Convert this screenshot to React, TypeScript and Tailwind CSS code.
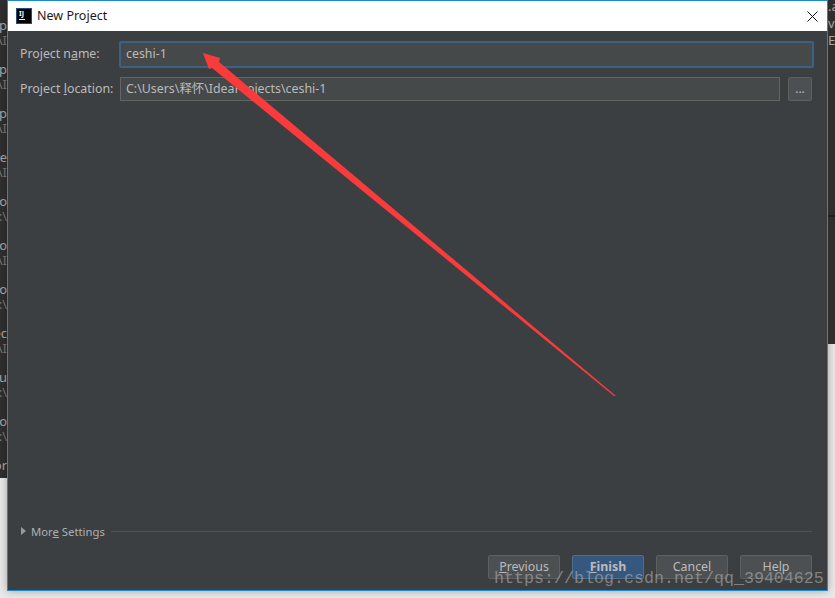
const sans = "font-['Noto_Sans','Open_Sans','Noto_Sans_CJK_SC',sans-serif]";

function SideText({ rows, align }: { rows: { t: string; c: string; h: number }[]; align: string }) {
  return (
    <div className={`flex flex-col overflow-hidden text-[13px] leading-none ${align}`}>
      {rows.map((r, i) => (
        <div key={i} className={`whitespace-nowrap ${r.c}`} style={{ height: r.h }}>
          {r.t}
        </div>
      ))}
    </div>
  );
}

function Btn({ children, primary }: { children: React.ReactNode; primary?: boolean }) {
  return (
    <button
      className={
        primary
          ? "flex h-6 w-[72px] items-center justify-center rounded-[2px] border border-[#4c708c] bg-[#365880] pt-px text-[12.4px] font-bold text-[#bbbbbb]"
          : "flex h-6 w-[72px] items-center justify-center rounded-[2px] border border-[#5e6060] bg-[#4c5052] pt-px text-[12.4px] text-[#bbbbbb]"
      }
    >
      {children}
    </button>
  );
}

const leftRows = [
  { t: "", c: "", h: 19 },
  { t: "p", c: "text-[#a9a9a9]", h: 15 },
  { t: "\\I", c: "text-[#77797a]", h: 29 },
  { t: "p", c: "text-[#a9a9a9]", h: 15 },
  { t: "\\I", c: "text-[#77797a]", h: 29 },
  { t: "p", c: "text-[#a9a9a9]", h: 15 },
  { t: "\\I", c: "text-[#77797a]", h: 29 },
  { t: "le", c: "text-[#a9a9a9]", h: 15 },
  { t: "\\I", c: "text-[#77797a]", h: 29 },
  { t: "o", c: "text-[#a9a9a9]", h: 15 },
  { t: ":\\", c: "text-[#77797a]", h: 29 },
  { t: "o", c: "text-[#a9a9a9]", h: 15 },
  { t: "\\I", c: "text-[#77797a]", h: 29 },
  { t: "o", c: "text-[#a9a9a9]", h: 15 },
  { t: ":\\", c: "text-[#77797a]", h: 29 },
  { t: "ec", c: "text-[#a9a9a9]", h: 15 },
  { t: "\\I", c: "text-[#77797a]", h: 29 },
  { t: "u", c: "text-[#a9a9a9]", h: 15 },
  { t: ":\\", c: "text-[#77797a]", h: 29 },
  { t: "o", c: "text-[#a9a9a9]", h: 15 },
  { t: ":\\", c: "text-[#77797a]", h: 29 },
  { t: "or", c: "text-[#a9a9a9]", h: 15 },
];

const rightRows = [
  { t: ".a", c: "text-[#a9a9a9]", h: 17 },
  { t: "ve", c: "text-[#a9a9a9]", h: 17 },
  { t: "E", c: "text-[#a9a9a9]", h: 17 },
];

export default function App() {
  return (
    <div className={`relative flex h-[598px] w-[835px] overflow-hidden bg-[#e9e9e9] ${sans}`}>
      {/* window behind the dialog */}
      <div className="flex w-[7px] shrink-0 flex-col">
        <div className="h-[478px] overflow-hidden bg-[#2f2f2f]">
          <SideText rows={leftRows} align="items-end" />
        </div>
      </div>

      {/* dialog */}
      <div className="flex h-[591px] w-[821px] shrink-0 flex-col border border-[#1e88d9] bg-[#3c3f41] shadow-[0_0_8px_rgba(0,0,0,0.3)]">
        <div className="flex h-[30px] items-center bg-white pl-2 pr-[9px]">
          <div className="flex h-4 w-4 flex-col border border-[#1c4f7c] bg-black pl-[2px] pt-[1px] text-[7px] font-bold leading-[8px] text-white">
            IJ
            <div className="mt-[1px] h-px w-[6px] bg-white" />
          </div>
          <span className="ml-[5px] text-[12.5px] text-[#1a1a1a]">New Project</span>
          <svg className="ml-auto h-[11px] w-[11px]" viewBox="0 0 11 11" stroke="#111" strokeWidth="1" fill="none">
            <path d="M0.5 0.5L10.5 10.5M10.5 0.5L0.5 10.5" />
          </svg>
        </div>

        <div className="flex flex-1 flex-col pl-3 pr-[15px]">
          <div className="mt-[10px] flex items-center">
            <label className="w-[99px] shrink-0 text-[12.3px] text-[#bbbbbb]">
              Project n<span className="underline">a</span>me:
            </label>
            <div className="flex h-[27px] w-[695px] shrink-0 items-center rounded-[2px] border-2 border-[#3d6185] bg-[#45494a] px-[5px] text-[12.4px] text-[#bbbbbb]">
              ceshi-1
            </div>
          </div>
          <div className="mt-[9px] flex items-center">
            <label className="w-[100px] shrink-0 text-[12.4px] text-[#bbbbbb]">
              Project <span className="underline">l</span>ocation:
            </label>
            <div className="flex h-6 w-[660px] shrink-0 items-center border border-[#646464] bg-[#45494a] px-[5px] text-[12.4px] text-[#bbbbbb]">
              C:\Users\释怀\IdeaProjects\ceshi-1
            </div>
            <button className="ml-2 flex h-6 w-6 shrink-0 items-center justify-center rounded-[2px] border border-[#5e6060] bg-[#4c5052] text-[12px] text-[#bbbbbb]">
              ...
            </button>
          </div>

          <div className="mt-auto flex h-4 items-center">
            <svg className="ml-px h-2 w-[5px]" viewBox="0 0 5 8" fill="#9a9a9a">
              <path d="M0 0L5 4L0 8Z" />
            </svg>
            <span className="ml-[5px] pt-px text-[11.3px] leading-4 text-[#a9b0b5]">
              Mor<span className="underline">e</span> Settings
            </span>
            <div className="ml-[6px] h-px flex-1 bg-[#505254]" />
          </div>

          <div className="mb-[11px] mt-4 flex justify-end gap-3">
            <Btn>
              <span>
                <span className="underline">P</span>revious
              </span>
            </Btn>
            <Btn primary>
              <span>
                <span className="underline">F</span>inish
              </span>
            </Btn>
            <Btn>Cancel</Btn>
            <Btn>Help</Btn>
          </div>
        </div>
      </div>

      <div className="flex w-[7px] shrink-0 flex-col">
        <div className="h-[344px] overflow-hidden bg-[#2f2f2f]">
          <SideText rows={rightRows} align="items-start" />
          <div className="mt-[164px] h-[2px] bg-[#1f1f1f]" />
        </div>
      </div>

      {/* red annotation arrow */}
      <svg className="pointer-events-none absolute left-0 top-0 h-[598px] w-[835px]" viewBox="0 0 835 598">
        <polygon points="203,53 220,58 219,62 616,396 614,396 212,68 209,69" fill="#f93b3b" />
      </svg>

      {/* blog watermark */}
      <div className="pointer-events-none absolute left-[494px] top-[569px] whitespace-nowrap font-['Liberation_Mono',monospace] text-[16.67px] leading-5 text-[#a8aaab]/65">
        https://blog.csdn.net/qq_39404625
      </div>
    </div>
  );
}
